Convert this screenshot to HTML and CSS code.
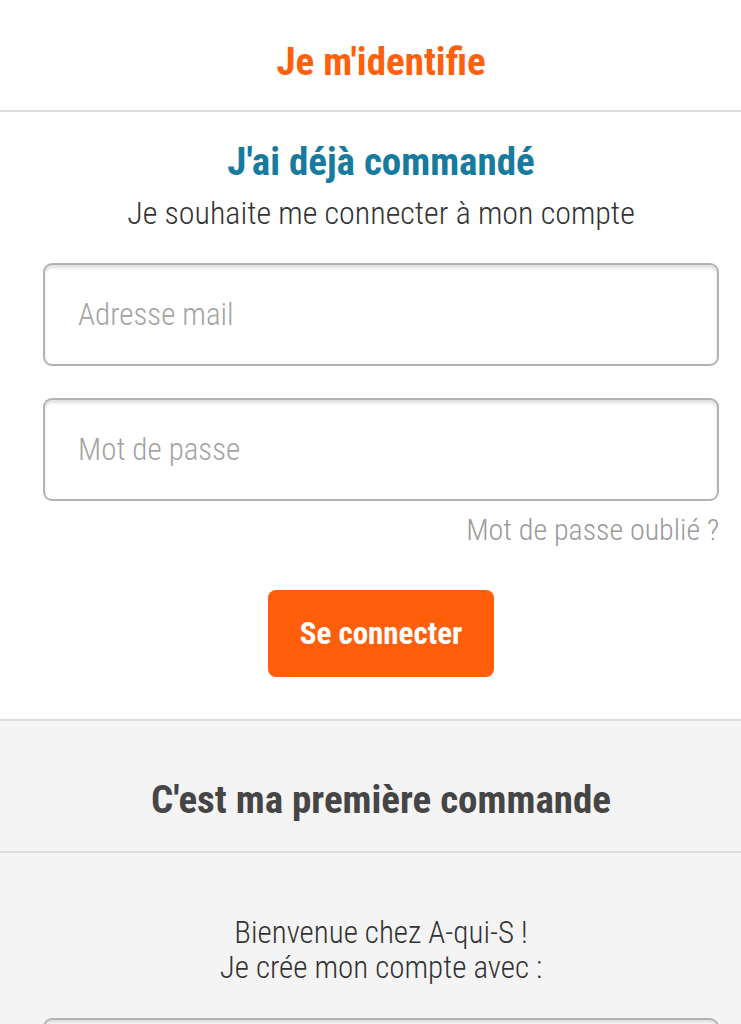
FILE: index.html
```html
<!DOCTYPE html>
<html lang="fr">
<head>
  <meta charset="UTF-8">
  <meta name="viewport" content="width=device-width, initial-scale=1.0">
  <title>Je m'identifie</title>
  <link rel="stylesheet" href="styles.css">
</head>
<body>
  <header class="topbar">
    <div class="wrap">
      <h1>Je m'identifie</h1>
    </div>
  </header>

  <section class="login">
    <div class="wrap">
      <h2>J'ai déjà commandé</h2>
      <p class="subtitle">Je souhaite me connecter à mon compte</p>
      <form class="login-form">
        <input type="email" class="field" placeholder="Adresse mail">
        <input type="password" class="field" placeholder="Mot de passe">
        <a href="#" class="forgot">Mot de passe oublié ?</a>
        <button type="button" class="btn">Se connecter</button>
      </form>
    </div>
  </section>

  <section class="register">
    <div class="register-head">
      <div class="wrap">
        <h3>C'est ma première commande</h3>
      </div>
    </div>
    <div class="wrap">
      <p class="welcome">Bienvenue chez A-qui-S !<br>Je crée mon compte avec :</p>
      <input type="email" class="field" placeholder="">
    </div>
  </section>
</body>
</html>
```

FILE: styles.css
```css
:root {
  --orange: #ff600c;
  --blue: #167b9d;
  --text: #333333;
  --muted: #a3a3a3;
  --line: #dcdcdc;
  --grey-bg: #f4f4f4;
}
* { box-sizing: border-box; }
body {
  margin: 0;
  font-family: "Roboto Condensed", Roboto, "Liberation Sans", sans-serif;
  font-stretch: condensed;
  color: var(--text);
  background: #ffffff;
}
.wrap {
  padding: 0 22px 0 43px;
}
.topbar {
  height: 112px;
  border-bottom: 2px solid var(--line);
}
.topbar h1 {
  margin: 0;
  padding-top: 38px;
  font-size: 39px;
  line-height: 48px;
  font-weight: 700;
  color: var(--orange);
  text-align: center;
}
.login {
  padding-bottom: 42px;
  border-bottom: 2px solid var(--line);
}
.login h2 {
  margin: 0;
  padding-top: 26px;
  font-size: 39px;
  line-height: 48px;
  font-weight: 700;
  color: var(--blue);
  text-align: center;
}
.subtitle {
  margin: 0;
  padding-top: 7px;
  font-size: 32px;
  line-height: 40px;
  font-weight: 300;
  text-align: center;
}
.login-form {
  display: flex;
  flex-direction: column;
  margin-top: 30px;
}
.field {
  display: block;
  width: 100%;
  height: 103px;
  padding: 0 33px;
  border: 2px solid #b3b3b3;
  border-radius: 9px;
  background: #ffffff;
  box-shadow: inset 0 3px 3px rgba(0,0,0,0.12);
  font-family: inherit;
  font-size: 31px;
  font-weight: 300;
  color: var(--text);
}
.field::placeholder {
  color: var(--muted);
}
.field + .field {
  margin-top: 32px;
}
.forgot {
  align-self: flex-end;
  margin-top: 11px;
  font-size: 30px;
  line-height: 36px;
  font-weight: 300;
  color: #9a9a9a;
  text-decoration: none;
}
.btn {
  align-self: center;
  width: 226px;
  height: 87px;
  margin-top: 42px;
  border: none;
  border-radius: 8px;
  background: #ff5f0a;
  color: #ffffff;
  font-family: inherit;
  font-size: 31px;
  font-weight: 700;
  cursor: pointer;
}
.register {
  background: var(--grey-bg);
  min-height: 400px;
}
.register-head {
  border-bottom: 2px solid var(--line);
}
.register h3 {
  margin: 0;
  padding: 55px 0 27px;
  font-size: 39px;
  line-height: 48px;
  font-weight: 700;
  color: #454545;
  text-align: center;
}
.welcome {
  margin: 0;
  padding-top: 62px;
  font-size: 31px;
  line-height: 35px;
  font-weight: 300;
  text-align: center;
}
.register .field {
  margin-top: 33px;
}
```
